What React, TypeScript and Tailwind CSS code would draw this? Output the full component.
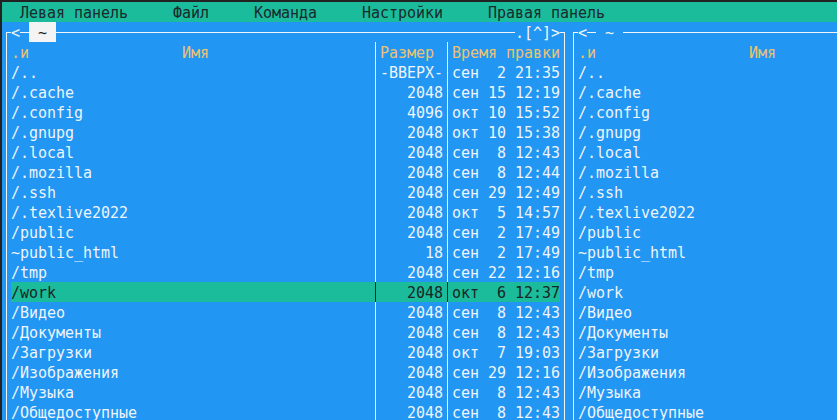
import React from "react";

type Entry = { name: string; size: string; time: string };

const ENTRIES: Entry[] = [
  { name: "/..", size: "-ВВЕРХ-", time: "сен  2 21:35" },
  { name: "/.cache", size: "2048", time: "сен 15 12:19" },
  { name: "/.config", size: "4096", time: "окт 10 15:52" },
  { name: "/.gnupg", size: "2048", time: "окт 10 15:38" },
  { name: "/.local", size: "2048", time: "сен  8 12:43" },
  { name: "/.mozilla", size: "2048", time: "сен  8 12:44" },
  { name: "/.ssh", size: "2048", time: "сен 29 12:49" },
  { name: "/.texlive2022", size: "2048", time: "окт  5 14:57" },
  { name: "/public", size: "2048", time: "сен  2 17:49" },
  { name: "~public_html", size: "18", time: "сен  2 17:49" },
  { name: "/tmp", size: "2048", time: "сен 22 12:16" },
  { name: "/work", size: "2048", time: "окт  6 12:37" },
  { name: "/Видео", size: "2048", time: "сен  8 12:43" },
  { name: "/Документы", size: "2048", time: "сен  8 12:43" },
  { name: "/Загрузки", size: "2048", time: "окт  7 19:03" },
  { name: "/Изображения", size: "2048", time: "сен 29 12:16" },
  { name: "/Музыка", size: "2048", time: "сен  8 12:43" },
  { name: "/Общедоступные", size: "2048", time: "сен  8 12:43" },
];

function Sep({ dark }: { dark?: boolean }) {
  return (
    <div className="w-[9px] shrink-0 flex justify-center">
      <div className={`w-px h-full ${dark ? "bg-[#1b2424]" : "bg-[#f2f5f8]"}`} />
    </div>
  );
}

function Line() {
  return (
    <div className="h-full flex items-center">
      <div className="h-px w-full bg-[#f2f5f8]" />
    </div>
  );
}

function Panel({ active }: { active: boolean }) {
  return (
    <div className="w-[567px] shrink-0 flex flex-col">
      {/* top frame */}
      <div className="h-[20px] flex">
        <div className="w-[9px] shrink-0 flex items-end">
          <div className="ml-[4px] w-[5px] h-[10px] border-l border-t border-[#f2f5f8]" />
        </div>
        <span className="w-[9px] shrink-0 text-[#f2f5f8]">&lt;</span>
        <div className="w-[9px] shrink-0">
          <Line />
        </div>
        <span
          className={`w-[27px] shrink-0 whitespace-pre ${
            active ? "bg-[#f4f4f4] text-[#1b2424]" : "text-[#f2f5f8]"
          }`}
        >
          {" ~ "}
        </span>
        <div className="flex-1">
          <Line />
        </div>
        {active && (
          <span className="w-[45px] shrink-0 text-[#f2f5f8] whitespace-pre">.[^]&gt;</span>
        )}
        <div className="w-[9px] shrink-0 flex items-end">
          <div className="mr-[4px] w-[5px] h-[10px] border-r border-t border-[#f2f5f8]" />
        </div>
      </div>

      {/* body */}
      <div className="flex-1 mx-[4px] border-x border-[#f2f5f8] px-[4px]">
        <div className="h-[20px] flex text-[#ecc272]">
          <div className="w-[360px] shrink-0 whitespace-pre">{".и                 Имя"}</div>
          {active && (
            <>
              <Sep />
              <div className="w-[63px] shrink-0">Размер</div>
              <Sep />
              <div className="w-[108px] shrink-0 whitespace-pre">Время правки</div>
            </>
          )}
        </div>
        {ENTRIES.map((e) => {
          const sel = active && e.name === "/work";
          return (
            <div
              key={e.name}
              className={`h-[20px] flex ${sel ? "bg-[#1abc9c] text-[#1b2424]" : "text-[#eef4fb]"}`}
            >
              <div className="w-[360px] shrink-0 whitespace-pre">{e.name}</div>
              {active && (
                <>
                  <Sep dark={sel} />
                  <div className="w-[63px] shrink-0 text-right whitespace-pre">{e.size}</div>
                  <Sep dark={sel} />
                  <div className="w-[108px] shrink-0 whitespace-pre">{e.time}</div>
                </>
              )}
            </div>
          );
        })}
      </div>
    </div>
  );
}

export default function App() {
  return (
    <div className="w-[837px] h-[420px] overflow-hidden bg-[#222222] pt-[2px] pl-[2px] font-['DejaVu_Sans_Mono',monospace] text-[15px] leading-[22px] tracking-[-0.03px]">
      {/* Menu bar */}
      <div className="h-[20px] bg-[#1abc9c] text-[#1b2a2a] whitespace-pre">
        {"  Левая панель     Файл     Команда     Настройки     Правая панель"}
      </div>

      {/* Panels */}
      <div className="h-[398px] flex bg-[#2196f3] overflow-hidden">
        <Panel active />
        <Panel active={false} />
      </div>
    </div>
  );
}
